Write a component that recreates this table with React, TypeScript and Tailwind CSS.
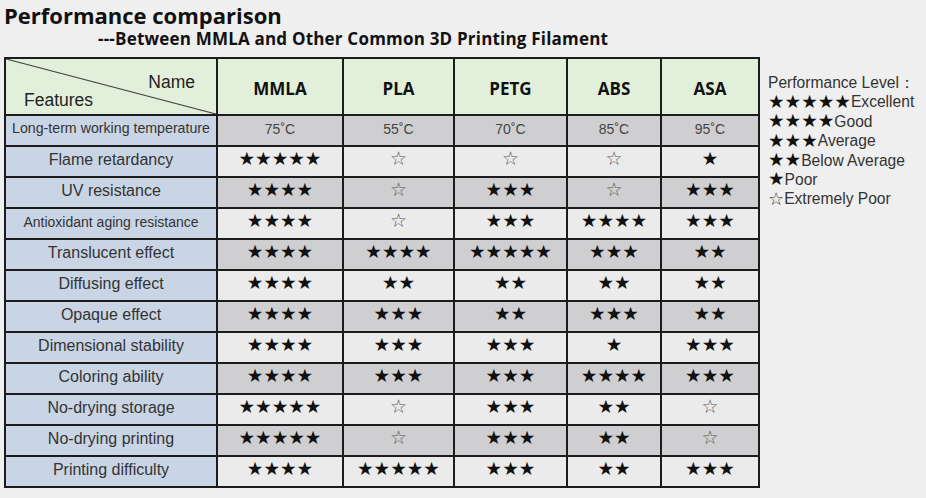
import React from 'react';

type Row = { feature: string; size?: string; values: string[] };

const MATERIALS = ['MMLA', 'PLA', 'PETG', 'ABS', 'ASA'];
const COL_WIDTHS = ['w-[212px]', 'w-[126px]', 'w-[111px]', 'w-[113px]', 'w-[94px]', 'w-[98px]'];

const ROWS: Row[] = [
    { feature: 'Long-term working temperature', size: 'text-[14.2px]', values: ['75˚C', '55˚C', '70˚C', '85˚C', '95˚C'] },
    { feature: 'Flame retardancy', values: ['5', '0', '0', '0', '1'] },
    { feature: 'UV resistance', values: ['4', '0', '3', '0', '3'] },
    { feature: 'Antioxidant aging resistance', size: 'text-[14px]', values: ['4', '0', '3', '4', '3'] },
    { feature: 'Translucent effect', values: ['4', '4', '5', '3', '2'] },
    { feature: 'Diffusing effect', values: ['4', '2', '2', '2', '2'] },
    { feature: 'Opaque effect', values: ['4', '3', '2', '3', '2'] },
    { feature: 'Dimensional stability', values: ['4', '3', '3', '1', '3'] },
    { feature: 'Coloring ability', values: ['4', '3', '3', '4', '3'] },
    { feature: 'No-drying storage', values: ['5', '0', '3', '2', '0'] },
    { feature: 'No-drying printing', values: ['5', '0', '3', '2', '0'] },
    { feature: 'Printing difficulty', values: ['4', '5', '3', '2', '3'] },
];

const LEGEND = [
    { stars: 5, label: 'Excellent' },
    { stars: 4, label: 'Good' },
    { stars: 3, label: 'Average' },
    { stars: 2, label: 'Below Average' },
    { stars: 1, label: 'Poor' },
];

function Rating({ value }: { value: string }) {
    if (value.includes('C')) {
        return <span className="text-[14px] text-[#444] font-['Liberation_Sans',Arial,sans-serif]">{value}</span>;
    }
    const n = Number(value);
    if (n === 0) {
        return <span className="text-[19px] leading-none text-[#555] font-['DejaVu_Sans',sans-serif]">☆</span>;
    }
    return (
        <span className="text-[18.5px] leading-none text-[#111] font-['DejaVu_Sans',sans-serif]">
            {'★'.repeat(n)}
        </span>
    );
}

export default function App() {
    return (
        <div className="w-[926px] h-[498px] bg-[#efefef] overflow-hidden font-['Liberation_Sans',Arial,sans-serif]">
            {/* --- タイトル --- */}
            <div className="pl-[4px] pt-[1px]">
                <h1 className="text-[22px] leading-[28px] font-bold text-[#111] font-['Open_Sans',sans-serif]">
                    Performance comparison
                </h1>
                <h2 className="pl-[94px] text-[17px] leading-[20px] font-bold tracking-[0.2px] text-[#111] font-['Open_Sans',sans-serif]">
                    ---Between MMLA and Other Common 3D Printing Filament
                </h2>
            </div>

            <div className="flex items-start pl-[4px] mt-[8px]">
                {/* --- 比較表 --- */}
                <table className="border-collapse table-fixed w-[755px] border-2 border-[#1c1c1c]">
                    <colgroup>
                        {COL_WIDTHS.map((w, i) => <col key={i} className={w} />)}
                    </colgroup>
                    <thead>
                        <tr className="h-[57px] bg-[#e2efda]">
                            <th className="relative border-2 border-[#1c1c1c] p-0 font-normal">
                                <svg className="absolute inset-0 w-full h-full" preserveAspectRatio="none" viewBox="0 0 100 100">
                                    <line x1="0" y1="0" x2="100" y2="100" stroke="#444" strokeWidth="1.2" vectorEffect="non-scaling-stroke" />
                                </svg>
                                <div className="relative h-[55px] text-[17.5px] text-[#222]">
                                    <span className="absolute right-[21px] top-[10px]">Name</span>
                                    <span className="absolute left-[18px] top-[28px]">Features</span>
                                </div>
                            </th>
                            {MATERIALS.map(m => (
                                <th key={m} className="border-2 border-[#1c1c1c] text-[17px] font-bold text-[#111] font-['Open_Sans',sans-serif] pt-[4px]">
                                    {m}
                                </th>
                            ))}
                        </tr>
                    </thead>
                    <tbody>
                        {ROWS.map((row, i) => (
                            <tr key={row.feature} className={`h-[31px] ${i % 2 === 0 ? 'bg-[#cfcfd2]' : 'bg-[#ebebeb]'}`}>
                                <td className={`border-2 border-[#1c1c1c] bg-[#c9d5e5] text-center text-[#333] p-0 pb-[3px] ${row.size ?? 'text-[16px]'}`}>
                                    {row.feature}
                                </td>
                                {row.values.map((v, j) => (
                                    <td key={j} className="border-2 border-[#1c1c1c] text-center p-0 pb-[3px]">
                                        <Rating value={v} />
                                    </td>
                                ))}
                            </tr>
                        ))}
                    </tbody>
                </table>

                {/* --- 凡例 --- */}
                <div className="ml-[8px] mt-[16px] text-[15.6px] text-[#333]">
                    <div className="h-[19.4px] leading-[19.4px]">Performance Level：</div>
                    {LEGEND.map(l => (
                        <div key={l.label} className="flex items-center h-[19.4px]">
                            <span className="text-[18.5px] leading-none text-[#111] font-['DejaVu_Sans',sans-serif]">{'★'.repeat(l.stars)}</span>
                            <span className="leading-[19.4px]">{l.label}</span>
                        </div>
                    ))}
                    <div className="flex items-center h-[19.4px]">
                        <span className="text-[18px] leading-none text-[#333] font-['DejaVu_Sans',sans-serif]">☆</span>
                        <span className="leading-[19.4px]">Extremely Poor</span>
                    </div>
                </div>
            </div>
        </div>
    );
}
